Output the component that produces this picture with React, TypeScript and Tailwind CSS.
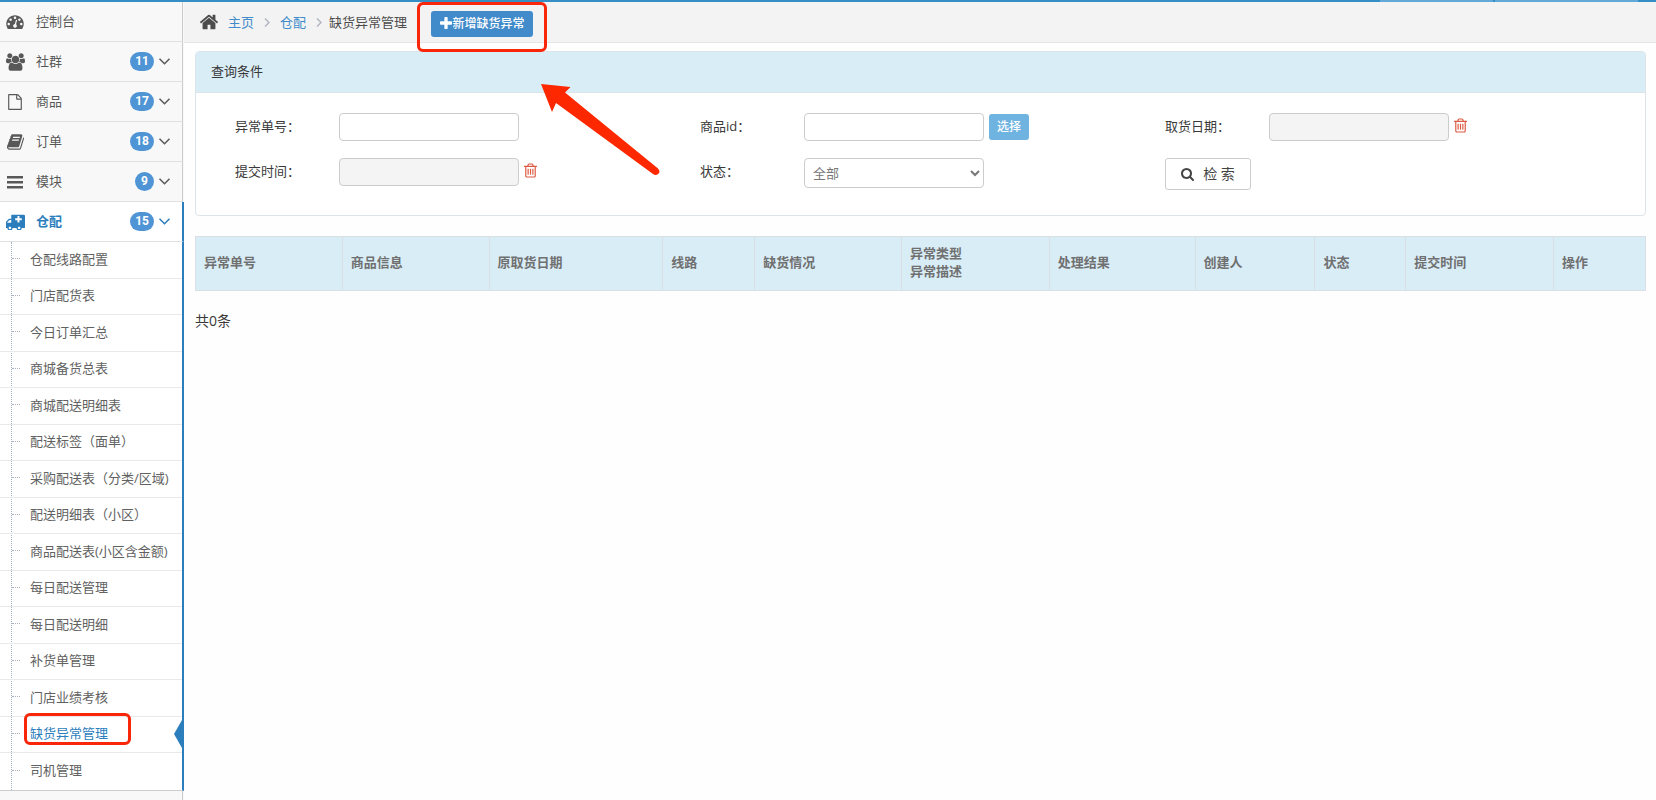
import type { ReactNode } from 'react'

interface IconProps {
  name: keyof typeof icons
  className?: string
}

interface MenuItem {
  label: string
  icon: keyof typeof icons
  count?: number
  active?: boolean
}

const icons = {
  home: {
    box: '0 0 1792 1792',
    d: 'M1472 992v480q0 26-19 45t-45 19h-384v-384h-256v384h-384q-26 0-45-19t-19-45v-480q0-1 .5-3t.5-3l575-474 575 474q1 2 1 6zm223-69l-62 74q-8 9-21 11h-3q-13 0-21-7l-692-577-692 577q-12 8-24 7-13-2-21-11l-62-74q-8-10-7-23.5t11-21.5l719-599q32-26 76-26t76 26l244 204v-195q0-14 9-23t23-9h192q14 0 23 9t9 23v408l219 182q10 8 11 21.5t-7 23.5z',
  },
  dashboard: {
    box: '0 128 1792 1536',
    d: 'M384 1152q0-53-37.5-90.5t-90.5-37.5-90.5 37.5-37.5 90.5 37.5 90.5 90.5 37.5 90.5-37.5 37.5-90.5zm192-448q0-53-37.5-90.5t-90.5-37.5-90.5 37.5-37.5 90.5 37.5 90.5 90.5 37.5 90.5-37.5 37.5-90.5zm428 481l101-382q6-26-7.5-48.5t-38.5-29.5-48 6.5-30 39.5l-101 382q-60 5-107 43.5t-63 98.5q-20 77 20 146t117 89 146-20 89-117q16-60-6-117t-72-91zm660-33q0-53-37.5-90.5t-90.5-37.5-90.5 37.5-37.5 90.5 37.5 90.5 90.5 37.5 90.5-37.5 37.5-90.5zm-640-640q0-53-37.5-90.5t-90.5-37.5-90.5 37.5-37.5 90.5 37.5 90.5 90.5 37.5 90.5-37.5 37.5-90.5zm448 192q0-53-37.5-90.5t-90.5-37.5-90.5 37.5-37.5 90.5 37.5 90.5 90.5 37.5 90.5-37.5 37.5-90.5zm320 448q0 261-141 483-19 29-54 29h-1402q-35 0-54-29-141-221-141-483 0-182 71-348t191-286 286-191 348-71 348 71 286 191 191 286 71 348z',
  },
  users: {
    box: '0 0 1920 1792',
    d: 'M593 896q-162 5-265 128h-134q-82 0-138-40.5t-56-118.5q0-353 124-353 6 0 43.5 21t97.5 42.5 119 21.5q67 0 133-23-5 37-5 66 0 139 81 256zm1071 637q0 120-73 189.5t-194 69.5h-874q-121 0-194-69.5t-73-189.5q0-53 3.5-103.5t14-109 26.5-108.5 43-97.5 62-81 85.5-53.5 111.5-20q10 0 43 21.5t73 48 107 48 135 21.5 135-21.5 107-48 73-48 43-21.5q61 0 111.5 20t85.5 53.5 62 81 43 97.5 26.5 108.5 14 109 3.5 103.5zm-1024-1277q0 106-75 181t-181 75-181-75-75-181 75-181 181-75 181 75 75 181zm704 384q0 159-112.5 271.5t-271.5 112.5-271.5-112.5-112.5-271.5 112.5-271.5 271.5-112.5 271.5 112.5 112.5 271.5zm576 225q0 78-56 118.5t-138 40.5h-134q-103-123-265-128 81-117 81-256 0-29-5-66 66 23 133 23 59 0 119-21.5t97.5-42.5 43.5-21q124 0 124 353zm-128-609q0 106-75 181t-181 75-181-75-75-181 75-181 181-75 181 75 75 181z',
  },
  file: {
    box: '0 0 1792 1792',
    d: 'M1596 380q28 28 48 76t20 88v1152q0 40-28 68t-68 28h-1344q-40 0-68-28t-28-68v-1600q0-40 28-68t68-28h896q40 0 88 20t76 48zm-444-244v376h376q-10-29-22-41l-313-313q-12-12-41-22zm384 1528v-1024h-416q-40 0-68-28t-28-68v-416h-768v1536h1280z',
  },
  book: {
    box: '64 128 1664 1536',
    d: 'M1703 478q40 57 18 129l-275 906q-19 64-76.5 107.5t-122.5 43.5h-923q-77 0-148.5-53.5t-99.5-131.5q-24-67-2-127 0-4 3-27t4-37q1-8-3-21.5t-3-19.5q2-11 8-21t16.5-23.5 16.5-23.5q23-38 45-91.5t30-91.5q3-10 .5-30t-.5-28q3-11 17-28t17-23q21-36 42-92t25-90q1-9-2.5-32t.5-28q4-13 22-30.5t22-22.5q19-26 42.5-84.5t27.5-96.5q1-8-3-25.5t-2-26.5q2-8 9-18t18-23 17-21q8-12 16.5-30.5t15-35 16-36 19.5-32 26.5-23.5 36-11.5 47.5 5.5l-1 3q38-9 51-9h761q74 0 114 56t18 130l-274 906q-36 119-71.5 153.5t-128.5 34.5h-869q-27 0-38 15-11 16-1 43 24 70 144 70h923q29 0 56-15.5t35-41.5l300-987q7-22 5-57 38 15 59 43zm-1064 2q-4 13 2 22.5t20 9.5h608q13 0 25.5-9.5t16.5-22.5l21-64q4-13-2-22.5t-20-9.5h-608q-13 0-25.5 9.5t-16.5 22.5zm-83 256q-4 13 2 22.5t20 9.5h608q13 0 25.5-9.5t16.5-22.5l21-64q4-13-2-22.5t-20-9.5h-608q-13 0-25.5 9.5t-16.5 22.5z',
  },
  bars: {
    box: '0 0 16 16',
    d: 'M0 2h16v2.500H0zM0 7h16v2.500H0zM0 12h16v2.500H0z',
  },
  truck: {
    box: '64 128 1856 1536',
    d: 'M576 1472q0-52-38-90t-90-38-90 38-38 90 38 90 90 38 90-38 38-90zm-384-512h384v-256h-158q-14 2-22 9l-195 195q-7 12-9 22v30zm1280 512q0-52-38-90t-90-38-90 38-38 90 38 90 90 38 90-38 38-90zM1184 300h192v224h224v192h-224v224h-192v-224h-224v-192h224zM1920 192v1216q0 26-19 45t-45 19h-256q0 106-75 181t-181 75-181-75-75-181h-384q0 106-75 181t-181 75-181-75-75-181h-128q-26 0-45-19t-19-45 19-45 45-19v-416q0-26 13-58t32-51l198-198q19-19 51-32t58-13h160v-320q0-26 19-45t45-19h1152q26 0 45 19t19 45z',
  },
  plus: {
    box: '192 128 1408 1408',
    d: 'M1600 736v192q0 40-28 68t-68 28h-416v416q0 40-28 68t-68 28h-192q-40 0-68-28t-28-68v-416h-416q-40 0-68-28t-28-68v-192q0-40 28-68t68-28h416v-416q0-40 28-68t68-28h192q40 0 68 28t28 68v416h416q40 0 68 28t28 68z',
  },
  search: {
    box: '64 128 1664 1664',
    d: 'M1216 832q0-185-131.5-316.5t-316.5-131.5-316.5 131.5-131.5 316.5 131.5 316.5 316.5 131.5 316.5-131.5 131.5-316.5zm512 832q0 52-38 90t-90 38q-54 0-90-38l-343-342q-179 124-399 124-143 0-273.5-55.5t-225-150-150-225-55.5-273.5 55.5-273.5 150-225 225-150 273.5-55.5 273.5 55.5 225 150 150 225 55.5 273.5q0 220-124 399l343 343q37 37 37 90z',
  },
  trash: {
    box: '192 128 1408 1536',
    d: 'M704 736v576q0 14-9 23t-23 9h-64q-14 0-23-9t-9-23v-576q0-14 9-23t23-9h64q14 0 23 9t9 23zm256 0v576q0 14-9 23t-23 9h-64q-14 0-23-9t-9-23v-576q0-14 9-23t23-9h64q14 0 23 9t9 23zm256 0v576q0 14-9 23t-23 9h-64q-14 0-23-9t-9-23v-576q0-14 9-23t23-9h64q14 0 23 9t9 23zm128 724v-948h-896v948q0 22 7 40.5t14.5 27 10.5 8.5h832q3 0 10.5-8.5t14.5-27 7-40.5zm-672-1076h448l-48-117q-7-9-17-11h-317q-10 2-17 11zm928 32v64q0 14-9 23t-23 9h-96v948q0 83-47 143.5t-113 60.5h-832q-66 0-113-58.5t-47-141.5v-952h-96q-14 0-23-9t-9-23v-64q0-14 9-23t23-9h309l70-167q15-37 54-63t79-26h320q40 0 79 26t54 63l70 167h309q14 0 23 9t9 23z',
  },
}

const menu: MenuItem[] = [
  { label: '控制台', icon: 'dashboard' },
  { label: '社群', icon: 'users', count: 11 },
  { label: '商品', icon: 'file', count: 17 },
  { label: '订单', icon: 'book', count: 18 },
  { label: '模块', icon: 'bars', count: 9 },
  { label: '仓配', icon: 'truck', count: 15, active: true },
]

const iconSizes = {
  dashboard: 'w-[18px] h-[15px]',
  users: 'w-[19px] h-[18px]',
  file: 'w-4 h-4',
  book: 'w-[17px] h-4',
  bars: 'w-4 h-4',
  truck: 'w-[19px] h-4',
} as Record<string, string>

const submenu = [
  '仓配线路配置',
  '门店配货表',
  '今日订单汇总',
  '商城备货总表',
  '商城配送明细表',
  '配送标签（面单）',
  '采购配送表（分类/区域)',
  '配送明细表（小区）',
  '商品配送表(小区含金额)',
  '每日配送管理',
  '每日配送明细',
  '补货单管理',
  '门店业绩考核',
  '缺货异常管理',
  '司机管理',
]

const current = '缺货异常管理'

const columns = [
  { title: '异常单号', width: 147 },
  { title: '商品信息', width: 147 },
  { title: '原取货日期', width: 174 },
  { title: '线路', width: 92 },
  { title: '缺货情况', width: 147 },
  { title: '异常类型\n异常描述', width: 148 },
  { title: '处理结果', width: 146 },
  { title: '创建人', width: 120 },
  { title: '状态', width: 91 },
  { title: '提交时间', width: 148 },
  { title: '操作', width: 92 },
]

const totalWidth = columns.reduce((sum, c) => sum + c.width, 0)

function Icon({ name, className }: IconProps) {
  return (
    <svg viewBox={icons[name].box} fill="currentColor" aria-hidden="true" className={`shrink-0 ${className ?? ''}`}>
      <path d={icons[name].d} fillRule="evenodd" />
    </svg>
  )
}

function Chevron({ className, d, box }: { className: string; d: string; box: string }) {
  return (
    <svg viewBox={box} fill="none" stroke="currentColor" strokeWidth="1.5" aria-hidden="true" className={`shrink-0 ${className}`}>
      <path d={d} />
    </svg>
  )
}

function Sidebar() {
  return (
    <nav className="flex w-[184px] shrink-0 flex-col bg-[#f8f8f8]">
      <ul>
        {menu.map(item => (
          <li key={item.label}>
            <a
              href="#"
              className={`flex h-10 items-center border-b border-[#e0e0e0] pl-[5px] ${
                item.active
                  ? 'border-r-2 border-r-[#2b7dbc] bg-white pr-3 font-bold text-[#2b7dbc]'
                  : 'mr-px border-r border-r-[#ccc] pr-3 text-[#585858]'
              }`}
            >
              <span className="flex w-5 justify-center">
                <Icon name={item.icon} className={iconSizes[item.icon]} />
              </span>
              <span className="ml-[11px] flex-1 pb-0.5">{item.label}</span>
              {item.count && (
                <>
                  <span className="mr-[5px] mb-px min-w-[19px] rounded-full bg-[#4f94d4] px-[5px] text-center font-['Roboto',sans-serif] text-xs leading-[19px] font-bold text-white">
                    {item.count}
                  </span>
                  <Chevron className="mb-px h-[7px] w-[11px]" box="0 0 11 7" d="M.5.8l5 5 5-5" />
                </>
              )}
            </a>
          </li>
        ))}
      </ul>
      <ul className="relative border-r-2 border-b border-r-[#2b7dbc] border-b-[#ccc] bg-white">
        <li aria-hidden="true" className="absolute inset-y-0 left-[11px] border-l border-dotted border-[#a5b4c0]" />
        {submenu.map((label, i) => {
          const active = label === current
          return (
            <li
              key={label}
              className={`relative flex items-center pb-[3px] pl-3 ${i % 2 ? 'h-9' : 'h-[37px]'} ${
                i < submenu.length - 1 ? 'border-b border-[#e9e9e9]' : ''
              }`}
            >
              <span className="w-2 border-t border-dotted border-[#a5b4c0]" />
              <a href="#" className={`ml-[10px] whitespace-nowrap ${active ? 'text-[#2b7dbc]' : 'text-[#616161]'}`}>
                {label}
              </a>
              {active && (
                <>
                  <span className="absolute -top-1 left-6 h-8 w-[107px] rounded-[6px] border-3 border-[#f9260a]" />
                  <svg viewBox="0 0 8 28" aria-hidden="true" className="absolute top-[3px] right-0 h-7 w-2">
                    <path d="M8 0v28L0 14z" fill="#2b7dbc" />
                  </svg>
                </>
              )}
            </li>
          )
        })}
      </ul>
      <div className="mr-px flex-1 border-r border-[#ccc]" />
    </nav>
  )
}

function Field({ id, label, children }: { id: string; label: string; children: ReactNode }) {
  return (
    <div className="flex items-start">
      <label htmlFor={id} className="w-[104px] shrink-0 pt-1">{label}</label>
      {children}
    </div>
  )
}

function DateField({ id, label }: { id: string; label: string }) {
  return (
    <Field id={id} label={label}>
      <input id={id} type="text" readOnly className="h-7 w-[180px] rounded border border-[#ccc] bg-[#f4f4f4] px-2" />
      <button type="button" aria-label="清除" className="mt-[5px] ml-[5px] text-[#dd5a43]">
        <Icon name="trash" className="h-[15px] w-[13px]" />
      </button>
    </Field>
  )
}

function SearchPanel() {
  return (
    <form className="rounded border border-[#dce4ea] bg-white">
      <h2 className="flex h-10 items-center rounded-t-[3px] bg-[#d9edf7] px-[15px] pb-0.5">查询条件</h2>
      <div className="grid grid-cols-3 gap-y-[17px] border-t border-[#dce4ea] pt-5 pr-[15px] pb-[25px] pl-[39px]">
        <Field id="order" label="异常单号：">
          <input id="order" type="text" className="h-7 w-[180px] rounded border border-[#ccc] px-2" />
        </Field>
        <Field id="goods" label="商品id：">
          <input id="goods" type="text" className="h-7 w-[180px] rounded border border-[#ccc] px-2" />
          <button type="button" className="mt-px ml-[5px] h-[26px] w-10 rounded-[3px] bg-[#6fb3e0] text-xs font-medium text-white">
            选择
          </button>
        </Field>
        <DateField id="pickup" label="取货日期：" />
        <DateField id="submitted" label="提交时间：" />
        <Field id="status" label="状态：">
          <select id="status" className="h-[30px] w-[180px] rounded border border-[#ccc] bg-white px-1 text-[#777]">
            <option>全部</option>
          </select>
        </Field>
        <div>
          <button
            type="submit"
            className="flex h-8 w-[86px] items-center justify-center rounded-[3px] border border-[#ccc] text-sm text-[#444]"
          >
            <Icon name="search" className="mr-[9px] h-[13px] w-[13px]" />
            检 索
          </button>
        </div>
      </div>
    </form>
  )
}

export default function App() {
  return (
    <div className="flex min-h-screen flex-col bg-[#fefefe] font-['Open_Sans','Noto_Sans_CJK_SC',sans-serif] text-[13px] leading-[18px] text-[#393939]">
      <div className="flex h-0.5 justify-end gap-0.5 bg-[#368fc4] pr-[18px]">
        <span className="w-[113px] bg-[#62a8d9]" />
        <span className="w-[143px] bg-[#62a8d9]" />
      </div>
      <div className="flex flex-1">
        <Sidebar />
        <main className="min-w-0 flex-1">
          <header className="flex h-[41px] items-center border-b border-[#e5e5e5] bg-[#f3f3f3] pl-[15px]">
            <Icon name="home" className="h-5 w-5 text-[#4c4c4c]" />
            <a href="#" className="ml-[9px] text-[#428bca]">主页</a>
            <Chevron className="mx-[10px] h-[9px] w-[6px] text-[#b2b6bf]" box="0 0 6 9" d="M1 .5l4 4-4 4" />
            <a href="#" className="text-[#428bca]">仓配</a>
            <Chevron className="mr-[7px] ml-[10px] h-[9px] w-[6px] text-[#b2b6bf]" box="0 0 6 9" d="M1 .5l4 4-4 4" />
            <span className="text-[#4c4c4c]">{current}</span>
            <div className="relative mt-1 ml-6">
              <button
                type="button"
                className="flex h-[26px] w-[102px] items-center justify-center gap-px rounded-[3px] bg-[#428bca] text-xs font-medium text-white"
              >
                <Icon name="plus" className="mb-0.5 h-3 w-3" />
                新增缺货异常
              </button>
              <span className="pointer-events-none absolute -top-[9px] -left-[14px] h-[50px] w-[130px] rounded-[6px] border-3 border-[#f9260a]" />
              <svg viewBox="0 0 120 92" aria-hidden="true" className="pointer-events-none absolute top-[73px] left-[110px] h-[92px] w-[120px]">
                <path d="M0 0L29.500 3 24 8.500 117 84.500Q120 88 117 90 115 92 112 90L15 19 11 28z" fill="#fd2700" />
              </svg>
            </div>
          </header>
          <div className="pt-2 pr-[10px] pl-[11px]">
            <SearchPanel />
            <table className="mt-5 w-full table-fixed border-collapse border border-[#ddd] text-[#707070]">
              <thead>
                <tr className="h-[54px] bg-[#d9edf7]">
                  {columns.map(col => (
                    <th
                      key={col.title}
                      scope="col"
                      className="border border-[#d9dfe4] px-2 pb-[3px] text-left font-bold whitespace-pre-line"
                      style={{ width: `${(col.width / totalWidth) * 100}%` }}
                    >
                      {col.title}
                    </th>
                  ))}
                </tr>
              </thead>
            </table>
            <p className="mt-5 text-sm">共0条</p>
          </div>
        </main>
      </div>
    </div>
  )
}
